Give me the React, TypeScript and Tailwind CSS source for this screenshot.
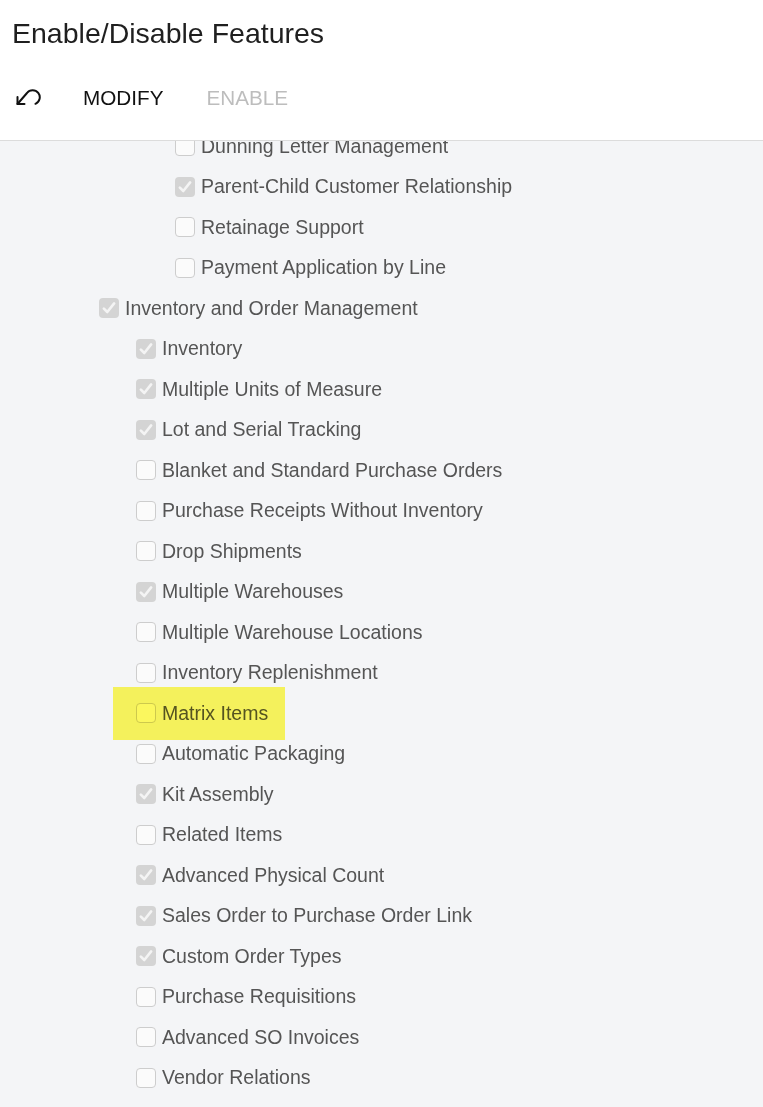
import React from "react";

type Feature = { label: string; checked: boolean; indent: number };

const features: Feature[] = [
  { label: "Dunning Letter Management", checked: false, indent: 175 },
  { label: "Parent-Child Customer Relationship", checked: true, indent: 175 },
  { label: "Retainage Support", checked: false, indent: 175 },
  { label: "Payment Application by Line", checked: false, indent: 175 },
  { label: "Inventory and Order Management", checked: true, indent: 99 },
  { label: "Inventory", checked: true, indent: 136 },
  { label: "Multiple Units of Measure", checked: true, indent: 136 },
  { label: "Lot and Serial Tracking", checked: true, indent: 136 },
  { label: "Blanket and Standard Purchase Orders", checked: false, indent: 136 },
  { label: "Purchase Receipts Without Inventory", checked: false, indent: 136 },
  { label: "Drop Shipments", checked: false, indent: 136 },
  { label: "Multiple Warehouses", checked: true, indent: 136 },
  { label: "Multiple Warehouse Locations", checked: false, indent: 136 },
  { label: "Inventory Replenishment", checked: false, indent: 136 },
  { label: "Matrix Items", checked: false, indent: 136 },
  { label: "Automatic Packaging", checked: false, indent: 136 },
  { label: "Kit Assembly", checked: true, indent: 136 },
  { label: "Related Items", checked: false, indent: 136 },
  { label: "Advanced Physical Count", checked: true, indent: 136 },
  { label: "Sales Order to Purchase Order Link", checked: true, indent: 136 },
  { label: "Custom Order Types", checked: true, indent: 136 },
  { label: "Purchase Requisitions", checked: false, indent: 136 },
  { label: "Advanced SO Invoices", checked: false, indent: 136 },
  { label: "Vendor Relations", checked: false, indent: 136 },
];

function Checkbox({ checked }: { checked: boolean }) {
  if (checked) {
    return (
      <span className="w-[20px] h-[20px] rounded-[4px] bg-[#d4d4d4] flex items-center justify-center shrink-0">
        <svg width="16" height="16" viewBox="0 0 14 14" fill="none">
          <path d="M2.5 7.5 L5.5 10.5 L11.5 3" stroke="#f4f4f4" strokeWidth="2.3" strokeLinecap="round" strokeLinejoin="round" />
        </svg>
      </span>
    );
  }
  return <span className="w-[20px] h-[20px] rounded-[4px] bg-[#fbfbfb] border border-[#cdcdcd] shrink-0" />;
}

// counter-clockwise "undo" arrow
function UndoIcon() {
  return (
    <svg width="26" height="26" viewBox="0 0 26 26" fill="none" stroke="#111" strokeWidth="2" strokeLinecap="round" strokeLinejoin="round">
      <path d="M2.5 12 V19 H9.5" />
      <path d="M2.5 19 L12 8 A7.1 7.1 0 1 1 20.5 18.8" />
    </svg>
  );
}

export default function App() {
  return (
    <div className="w-[763px] h-[1107px] flex flex-col bg-[#f4f5f7] overflow-hidden font-[family-name:'Liberation_Sans',Arial,sans-serif]">
      <div className="bg-white border-b border-[#dcdcdc] h-[141px] shrink-0 flex flex-col">
        <h1 className="pl-[12px] pt-[16px] text-[28.5px] leading-[34px] text-[#1f1f1f]">Enable/Disable Features</h1>
        <div className="flex items-center mt-[30px] h-[36px]">
          <span className="ml-[15px] flex items-center">
            <UndoIcon />
          </span>
          <span className="ml-[42px] text-[20.7px] text-[#111]">MODIFY</span>
          <span className="ml-[43px] text-[20.7px] text-[#bdbdbd]">ENABLE</span>
        </div>
      </div>
      <div className="flex-1 overflow-hidden">
        <div className="-mt-[15px] flex flex-col">
          {features.map((f) => (
            <div key={f.label} className="relative h-[40.5px] flex items-center" style={{ paddingLeft: f.indent }}>
              <Checkbox checked={f.checked} />
              <span className="ml-[6px] text-[19.5px] text-[#555] whitespace-nowrap">{f.label}</span>
              {f.label === "Matrix Items" && (
                <span className="absolute left-[113px] top-[-6px] w-[172px] h-[53px] bg-[#fffb5f] mix-blend-multiply" />
              )}
            </div>
          ))}
        </div>
      </div>
    </div>
  );
}
